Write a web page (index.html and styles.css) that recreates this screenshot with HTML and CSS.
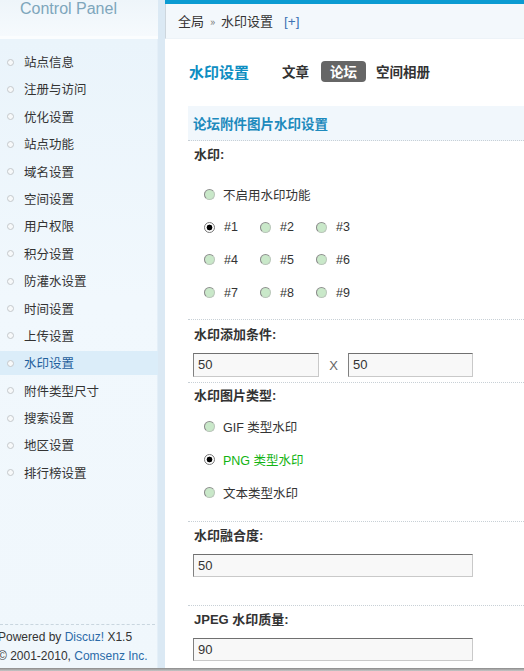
FILE: index.html
```html
<!DOCTYPE html>
<html lang="zh-CN">
<head>
<meta charset="utf-8">
<title>Control Panel - 水印设置</title>
<link rel="stylesheet" href="styles.css">
</head>
<body>
<div class="page">
  <aside class="sidebar">
    <div class="side-head"><span class="cp-title">Control Panel</span></div>
    <ul class="menu">
      <li><span class="dot"></span>站点信息</li>
      <li><span class="dot"></span>注册与访问</li>
      <li><span class="dot"></span>优化设置</li>
      <li><span class="dot"></span>站点功能</li>
      <li><span class="dot"></span>域名设置</li>
      <li><span class="dot"></span>空间设置</li>
      <li><span class="dot"></span>用户权限</li>
      <li><span class="dot"></span>积分设置</li>
      <li><span class="dot"></span>防灌水设置</li>
      <li><span class="dot"></span>时间设置</li>
      <li><span class="dot"></span>上传设置</li>
      <li class="active"><span class="dot"></span>水印设置</li>
      <li><span class="dot"></span>附件类型尺寸</li>
      <li><span class="dot"></span>搜索设置</li>
      <li><span class="dot"></span>地区设置</li>
      <li><span class="dot"></span>排行榜设置</li>
    </ul>
    <div class="side-foot">
      <p>Powered by <a>Discuz!</a> X1.5</p>
      <p>© 2001-2010, <a>Comsenz Inc.</a></p>
    </div>
  </aside>
  <main class="main">
    <div class="topbar"></div>
    <div class="crumb">全局 <span class="raquo">»</span> 水印设置 <a class="plus">[+]</a></div>
    <div class="titlebar">
      <h1 class="title">水印设置</h1>
      <nav class="tabs">
        <span class="tab">文章</span>
        <span class="tab current">论坛</span>
        <span class="tab">空间相册</span>
      </nav>
    </div>
    <div class="content">
      <div class="sechead">论坛附件图片水印设置</div>

      <div class="block b1">
        <div class="label">水印:</div>
        <div class="radios">
          <div class="rrow"><span class="opt"><span class="radio"></span>不启用水印功能</span></div>
          <div class="rrow"><span class="opt pos"><span class="radio on"></span>#1</span><span class="opt pos"><span class="radio"></span>#2</span><span class="opt pos"><span class="radio"></span>#3</span></div>
          <div class="rrow"><span class="opt pos"><span class="radio"></span>#4</span><span class="opt pos"><span class="radio"></span>#5</span><span class="opt pos"><span class="radio"></span>#6</span></div>
          <div class="rrow"><span class="opt pos"><span class="radio"></span>#7</span><span class="opt pos"><span class="radio"></span>#8</span><span class="opt pos"><span class="radio"></span>#9</span></div>
        </div>
      </div>

      <div class="block b2">
        <div class="label">水印添加条件:</div>
        <div class="inrow">
          <span class="input short">50</span>
          <span class="times">X</span>
          <span class="input short2">50</span>
        </div>
      </div>

      <div class="block b3">
        <div class="label">水印图片类型:</div>
        <div class="radios r2">
          <div class="rrow"><span class="opt"><span class="radio"></span>GIF 类型水印</span></div>
          <div class="rrow"><span class="opt green"><span class="radio on"></span>PNG 类型水印</span></div>
          <div class="rrow"><span class="opt"><span class="radio"></span>文本类型水印</span></div>
        </div>
      </div>

      <div class="block b4">
        <div class="label">水印融合度:</div>
        <div class="inrow"><span class="input long">50</span></div>
      </div>

      <div class="block b5">
        <div class="label">JPEG 水印质量:</div>
        <div class="inrow"><span class="input long">90</span></div>
      </div>
    </div>
  </main>
</div>
<div class="winedge"></div>
</body>
</html>
```
FILE: styles.css
```css
html, body {
  margin: 0;
  padding: 0;
  height: 671px;
  overflow: hidden;
  background: #fff;
  font-family: "Liberation Sans", "Noto Sans CJK SC", sans-serif;
  color: #333;
}
.page {
  display: flex;
  height: 668px;
}
.sidebar {
  width: 158px;
  flex: none;
  display: flex;
  flex-direction: column;
  background: linear-gradient(180deg, #eaf4fb 40px, #f1f8fd 300px, #f0f7fc 100%);
  border-right: 7px solid #dbe9f4;
  box-shadow: inset -1px 0 0 #e4eff8;
}
.side-head {
  height: 36px;
  background: linear-gradient(180deg, #eef5fa 0, #f6fafd 100%);
  border-bottom: 3px solid #fbfdfe;
  overflow: hidden;
}
.cp-title {
  display: block;
  padding-left: 20px;
  margin-top: 0;
  font-size: 16px;
  line-height: 18px;
  color: #7ea6bc;
}
.menu {
  list-style: none;
  margin: 0;
  padding: 11px 0 0;
  flex: 1;
}
.menu li {
  height: 24px;
  line-height: 24px;
  margin-bottom: 3.4px;
  font-size: 12.5px;
  color: #333;
  display: flex;
  align-items: center;
  font-family: "Noto Sans CJK SC", sans-serif;
}
.menu li.active {
  background: #dbedf9;
  color: #1f5f9c;
}
.dot {
  width: 5px;
  height: 5px;
  border: 1px solid #c4c8cb;
  border-radius: 50%;
  margin: 0 10px 0 7px;
  background: #f7f9fa;
}
.side-foot {
  border-top: 1px dashed #c9d6df;
  margin-right: 3px;
  padding-top: 3px;
  padding-bottom: 2px;
}
.side-foot p {
  margin: 0 0 0 -2px;
  font-size: 12px;
  line-height: 19px;
  color: #333;
  white-space: nowrap;
}
.side-foot a {
  color: #2a6aa8;
}
.main {
  flex: 1;
  display: flex;
  flex-direction: column;
  min-width: 0;
}
.topbar {
  height: 4px;
  background: #0b9bd2;
}
.crumb {
  height: 34px;
  line-height: 34px;
  background: #f3f8fc;
  border-left: 1px solid #cdd6dd;
  border-bottom: 1px solid #edf3f8;
  padding-left: 12px;
  font-size: 13px;
  color: #333;
  font-family: "Noto Sans CJK SC", sans-serif;
  white-space: nowrap;
}
.raquo {
  font-size: 11px;
  color: #777;
  padding: 0 3px;
}
.plus {
  color: #3c72b4;
  margin-left: 8px;
  font-size: 13.5px;
  font-family: "Liberation Sans", sans-serif;
}
.titlebar {
  display: flex;
  align-items: center;
  height: 44px;
  margin-top: 10px;
  padding-left: 24px;
}
.title {
  margin: 0;
  font-size: 15px;
  font-weight: bold;
  color: #0e8ec2;
  font-family: "Noto Sans CJK SC", sans-serif;
  margin-right: 27px;
}
.tabs {
  display: flex;
  align-items: center;
}
.tab {
  font-size: 13.5px;
  font-weight: bold;
  color: #333;
  padding: 0 6px;
  height: 21px;
  line-height: 21px;
  font-family: "Noto Sans CJK SC", sans-serif;
}
.tab.current {
  background: #666;
  color: #fff;
  border-radius: 4px;
  padding: 0 9px;
  margin: 0 4px 0 6px;
}
.content {
  padding-left: 23px;
  margin-top: 13px;
}
.sechead {
  height: 34px;
  line-height: 34px;
  background: #f1f7fc;
  border-bottom: 1px dotted #c8d0d6;
  padding-left: 5px;
  font-size: 13.5px;
  font-weight: bold;
  color: #1d8abd;
  font-family: "Noto Sans CJK SC", sans-serif;
}
.block {
  border-bottom: 1px dotted #c8d0d6;
  padding-left: 5px;
}
.label {
  height: 24px;
  line-height: 24px;
  font-size: 13px;
  font-weight: bold;
  color: #333;
  padding-left: 1px;
  font-family: "Liberation Sans", "Noto Sans CJK SC", sans-serif;
}
.b1 { padding-top: 2px; padding-bottom: 10px; }
.b1 .radios { padding-top: 11px; }
.b2 { padding-top: 3px; padding-bottom: 5px; }
.b3 { padding-top: 1px; padding-bottom: 12px; }
.b3 .radios { padding-top: 2px; }
.b4 { padding-top: 2px; padding-bottom: 28px; }
.b5 { padding-top: 2px; padding-bottom: 6px; border-bottom: none; }
.b4 .inrow, .b5 .inrow { padding-top: 6px; }
.b2 .inrow { padding-top: 6px; }
.radios {
  padding-left: 11px;
}
.rrow {
  height: 32.8px;
  display: flex;
  align-items: center;
}
.opt {
  display: flex;
  align-items: center;
  font-size: 12.5px;
  color: #333;
  font-family: "Liberation Sans", "Noto Sans CJK SC", sans-serif;
}
.opt.pos {
  width: 56px;
}
.opt.green {
  color: #12b312;
}
.radio {
  width: 9px;
  height: 9px;
  border-radius: 50%;
  background: #c9e8c9;
  border: 1px solid #b9c6b9;
  border-left-color: #888;
  border-top-color: #8f8f8f;
  margin-right: 8px;
  box-sizing: content-box;
}
.opt.pos .radio {
  margin-right: 9px;
}
.radio.on {
  background: radial-gradient(circle, #000 0 2.6px, #fff 3.2px);
  border-color: #777;
}
.inrow {
  display: flex;
  align-items: center;
}
.input {
  display: block;
  box-sizing: border-box;
  height: 24px;
  line-height: 22px;
  border: 1px solid #c9c9c9;
  border-top-color: #707070;
  border-left-color: #808080;
  background: #f8f8f8;
  padding-left: 4px;
  font-size: 13px;
  color: #333;
  font-family: "Liberation Sans", sans-serif;
}
.input.short { width: 126px; }
.input.short2 { width: 125px; }
.input.long { width: 280px; height: 23px; line-height: 21px; }
.times {
  width: 29px;
  text-align: center;
  font-size: 13px;
  color: #666;
}
.winedge {
  height: 3px;
  background: linear-gradient(180deg, #8a8a8a, #c8c8c8);
}
```
